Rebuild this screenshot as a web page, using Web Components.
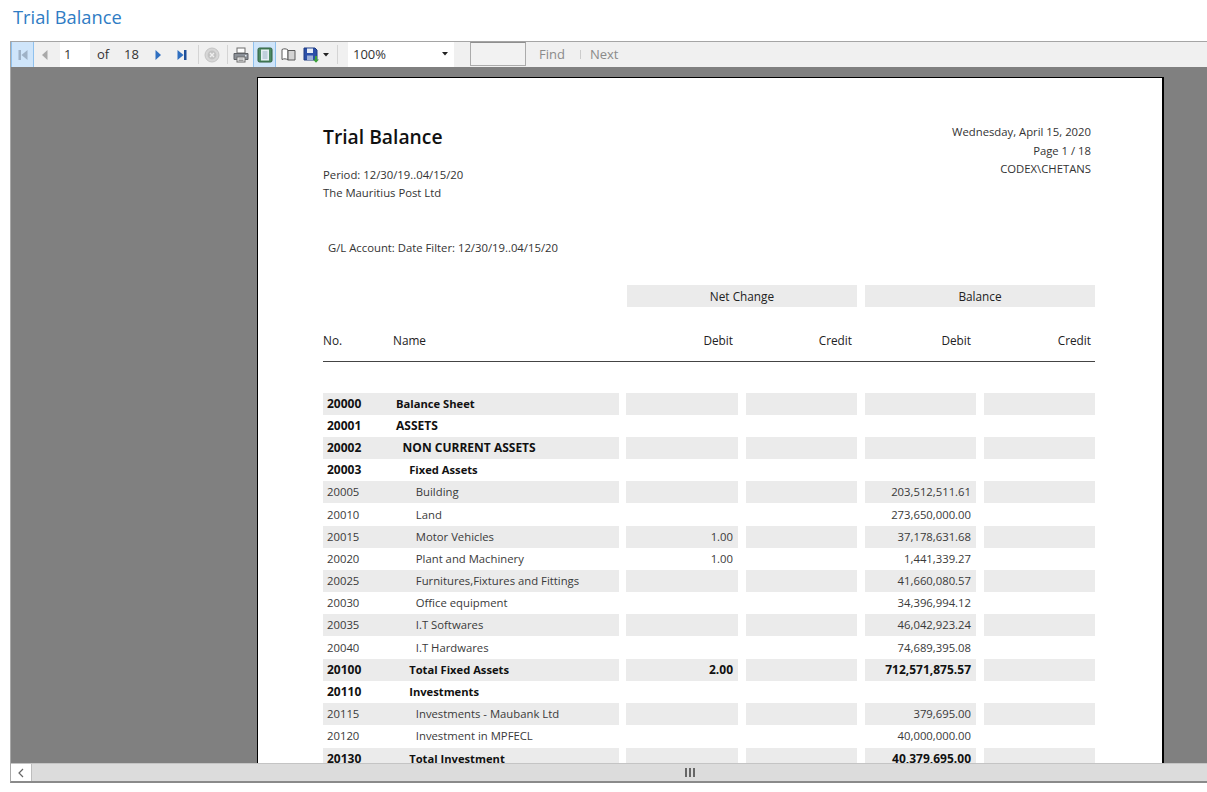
<!DOCTYPE html>
<html>
<head>
<meta charset="utf-8">
<title>Trial Balance</title>
<style>
    html, body { margin: 0; height: 100%; background: #fff; overflow: hidden; }
    body { font-family: "Open Sans", "Noto Sans", sans-serif; }
</style>
</head>
<body>
<report-app></report-app>

<script>
const ROWS = [
    { no: '20000', name: 'Balance Sheet', bold: true, indent: 0 },
    { no: '20001', name: 'ASSETS', bold: true, caps: true, indent: 0 },
    { no: '20002', name: 'NON CURRENT ASSETS', bold: true, caps: true, indent: 1 },
    { no: '20003', name: 'Fixed Assets', bold: true, indent: 2 },
    { no: '20005', name: 'Building', indent: 3, balance: '203,512,511.61' },
    { no: '20010', name: 'Land', indent: 3, balance: '273,650,000.00' },
    { no: '20015', name: 'Motor Vehicles', indent: 3, net: '1.00', balance: '37,178,631.68' },
    { no: '20020', name: 'Plant and Machinery', indent: 3, net: '1.00', balance: '1,441,339.27' },
    { no: '20025', name: 'Furnitures,Fixtures and Fittings', indent: 3, balance: '41,660,080.57' },
    { no: '20030', name: 'Office equipment', indent: 3, balance: '34,396,994.12' },
    { no: '20035', name: 'I.T Softwares', indent: 3, balance: '46,042,923.24' },
    { no: '20040', name: 'I.T Hardwares', indent: 3, balance: '74,689,395.08' },
    { no: '20100', name: 'Total Fixed Assets', bold: true, indent: 2, net: '2.00', balance: '712,571,875.57' },
    { no: '20110', name: 'Investments', bold: true, indent: 2 },
    { no: '20115', name: 'Investments - Maubank Ltd', indent: 3, balance: '379,695.00' },
    { no: '20120', name: 'Investment in MPFECL', indent: 3, balance: '40,000,000.00' },
    { no: '20130', name: 'Total Investment', bold: true, indent: 2, balance: '40,379,695.00' }
];

const ICONS = {
    first: `<svg width="12" height="12" viewBox="0 0 12 12"><rect x="1.500" y="1" width="2.500" height="10" fill="#9fb2c6"/><path d="M10.500 1v10L4.500 6z" fill="#9fb2c6"/></svg>`,
    prev: `<svg width="12" height="12" viewBox="0 0 12 12"><path d="M8.500 1v10L3 6z" fill="#a9a9a9"/></svg>`,
    next: `<svg width="12" height="12" viewBox="0 0 12 12"><path d="M3.500 1v10L9 6z" fill="#2f6fc0"/></svg>`,
    last: `<svg width="12" height="12" viewBox="0 0 12 12"><path d="M1.500 1v10L7.500 6z" fill="#2f6fc0"/><rect x="8" y="1" width="2.500" height="10" fill="#1f4f9a"/></svg>`,
    stop: `<svg width="16" height="16" viewBox="0 0 16 16"><circle cx="8" cy="8" r="7" fill="#d6d6d6" stroke="#c4c4c4"/><circle cx="8" cy="8" r="4.400" fill="#c2c2c2"/><path d="M6 6l4 4M10 6l-4 4" stroke="#eee" stroke-width="1.400"/></svg>`,
    print: `<svg width="16" height="16" viewBox="0 0 16 16"><rect x="4" y="1" width="8" height="5" fill="#fff" stroke="#6d6d6d"/><path d="M1 6.500h14v6H1z" fill="#8b9097" stroke="#5e6166"/><rect x="4" y="10" width="8" height="5" fill="#f5f5f5" stroke="#6d6d6d"/><path d="M5.500 12h5M5.500 13.500h5" stroke="#9a9a9a"/><rect x="12" y="8" width="1.500" height="1.500" fill="#dfe6ee"/></svg>`,
    layout: `<svg width="16" height="16" viewBox="0 0 16 16"><rect x="1" y="1" width="14" height="14" rx="1.500" fill="#4d8a63" stroke="#2f5f40"/><rect x="4" y="2.500" width="8" height="11" fill="#e7eef4"/><path d="M5.500 5h5M5.500 7h5M5.500 9h5M5.500 11h5" stroke="#9bb0c4"/></svg>`,
    book: `<svg width="15" height="13" viewBox="0 0 15 13"><path d="M1 1.500c2-1 4-1 6 .5v10c-2-1.500-4-1.500-6-.5z" fill="#fff" stroke="#5a5a5a"/><path d="M7 2.500h7v9.500H7z" fill="#d3d3d3" stroke="#5a5a5a"/></svg>`,
    save: `<svg width="16" height="16" viewBox="0 0 16 16"><path d="M1 1h11l2 2v10H1z" fill="#2b4fa8" stroke="#1e3a80"/><rect x="4" y="1.500" width="6" height="4.500" fill="#e8edf5"/><rect x="4" y="8.500" width="6" height="4.500" fill="#9cb0d8"/><path d="M12 9v3.500h-2l3 3.200 3-3.200h-2V9z" fill="#3da13a"/></svg>`,
    caret: `<svg width="6" height="4" viewBox="0 0 6 4"><path d="M0 0h6L3 3.500z" fill="#222"/></svg>`
};

class ReportApp extends HTMLElement {
    constructor() {
        super();
        this.attachShadow({ mode: 'open' });
    }

    connectedCallback() {
        this.shadowRoot.innerHTML = `
            <style>
                :host {
                    display: block;
                    height: 792px;
                    box-sizing: border-box;
                    padding-left: 10px;
                }
                h1 {
                    margin: 0 0 0 3px;
                    height: 41px;
                    box-sizing: border-box;
                    padding-top: 4px;
                    font-size: 18.300px;
                    line-height: 25px;
                    font-weight: 400;
                    color: #2f7cc4;
                }
            </style>
            <h1>Trial Balance</h1>
            <report-viewer></report-viewer>
        `;
    }
}

class ReportViewer extends HTMLElement {
    constructor() {
        super();
        this.attachShadow({ mode: 'open' });
    }

    connectedCallback() {
        this.shadowRoot.innerHTML = `
            <style>
                :host {
                    display: flex;
                    flex-direction: column;
                    height: 742px;
                    box-sizing: border-box;
                    border-left: 1px solid #a8a8a8;
                    border-bottom: 2px solid #8a8a8a;
                }
                .canvas {
                    flex: 1;
                    min-height: 0;
                    background: #808080;
                    overflow: hidden;
                    padding: 10px 0 0 246px;
                }
            </style>
            <viewer-toolbar></viewer-toolbar>
            <div class="canvas"><report-page></report-page></div>
            <viewer-scrollbar></viewer-scrollbar>
        `;
    }
}

class ViewerToolbar extends HTMLElement {
    constructor() {
        super();
        this.attachShadow({ mode: 'open' });
    }

    connectedCallback() {
        this.shadowRoot.innerHTML = `
            <style>
                :host {
                    display: flex;
                    align-items: stretch;
                    height: 26px;
                    box-sizing: border-box;
                    background: #f0f0f0;
                    border-top: 1px solid #a5a5a5;
                    font-size: 13px;
                    color: #333;
                    flex: none;
                }
                .btn {
                    display: flex;
                    align-items: center;
                    justify-content: center;
                    box-sizing: border-box;
                    flex: none;
                }
                .on {
                    background: #cfe5fa;
                    border: 1px solid #8fc1ee;
                    border-top: 0;
                    border-bottom: 0;
                }
                .sep {
                    flex: none;
                    width: 1px;
                    margin: 3px 0;
                    background: #d4d4d4;
                }
                .field {
                    flex: none;
                    display: flex;
                    align-items: center;
                    background: #fff;
                    box-sizing: border-box;
                    padding-bottom: 2px;
                }
                .txt { flex: none; display: flex; align-items: center; padding-bottom: 2px; }
                .find {
                    flex: none;
                    width: 56px;
                    height: 24px;
                    box-sizing: border-box;
                    margin-left: 16px;
                    background: #f2f2f2;
                    border: 1px solid #ababab;
                    border-top-color: #8f8f8f;
                }
                .link { color: #8a8a8a; }
            </style>
            <div class="btn on" style="width:23px">${ICONS.first}</div>
            <div class="btn" style="width:22px">${ICONS.prev}</div>
            <div class="field" style="width:30px;padding-left:4px;margin-left:4px">1</div>
            <div class="txt" style="margin-left:7px;width:27px">of</div>
            <div class="txt" style="width:20px">18</div>
            <div class="btn" style="width:28px">${ICONS.next}</div>
            <div class="btn" style="width:19px">${ICONS.last}</div>
            <div class="sep" style="margin-left:7px"></div>
            <div class="btn" style="width:26px">${ICONS.stop}</div>
            <div class="sep" style="margin-left:2px"></div>
            <div class="btn" style="width:25px">${ICONS.print}</div>
            <div class="btn on" style="width:23px">${ICONS.layout}</div>
            <div class="btn" style="width:24px">${ICONS.book}</div>
            <div class="btn" style="width:22px">${ICONS.save}</div>
            <div class="btn" style="width:8px">${ICONS.caret}</div>
            <div class="sep" style="margin-left:7px"></div>
            <div class="field" style="width:106px;margin-left:10px;padding-left:5px;justify-content:space-between">
                100%<span style="display:flex;padding-right:6px">${ICONS.caret}</span>
            </div>
            <div class="find"></div>
            <div class="txt link" style="margin-left:13px">Find</div>
            <div class="sep" style="margin:8px 9px 8px 15px;background:#ccc"></div>
            <div class="txt link">Next</div>
        `;
    }
}

class ReportPage extends HTMLElement {
    constructor() {
        super();
        this.attachShadow({ mode: 'open' });
    }

    connectedCallback() {
        this.shadowRoot.innerHTML = `
            <style>
                :host {
                    display: block;
                    width: 907px;
                    box-sizing: border-box;
                    background: #fff;
                    border: 1px solid #000;
                    border-right-width: 2px;
                    border-bottom: 0;
                    padding: 44px 67px 0 65px;
                    font-size: 11.300px;
                    color: #333;
                }
                .head { display: flex; justify-content: space-between; }
                h2 {
                    margin: 0 0 15px;
                    font-size: 19.300px;
                    line-height: 29px;
                    font-weight: 600;
                    color: #111;
                }
                .meta { line-height: 18.300px; }
                .info {
                    padding: 1px 4px 0 0;
                    text-align: right;
                    line-height: 18.500px;
                }
                .filter { margin: 36px 0 0 5px; line-height: 18px; }
                .bands {
                    display: grid;
                    grid-template-columns: 296px 231px 231px;
                    column-gap: 7px;
                    margin-top: 28px;
                    height: 22px;
                    line-height: 22px;
                    font-size: 11.800px;
                    color: #222;
                }
                .bands div {
                    background: #ebebeb;
                    text-align: center;
                }
                .bands div:first-child { background: none; }
                .bands div:nth-child(n+2) { margin-left: 1px; }
                .cols {
                    display: grid;
                    grid-template-columns: 296px repeat(4, 112px);
                    column-gap: 7px;
                    margin-top: 22px;
                    height: 32px;
                    line-height: 22px;
                    font-size: 11.800px;
                    color: #222;
                    border-bottom: 1px solid #444;
                }
                .cols .r { text-align: right; padding-right: 5px; }
                .cols .main { display: flex; }
                .cols .no { width: 70px; flex: none; }
                .rows { margin-top: 31px; }
            </style>
            <div class="head">
                <div>
                    <h2>Trial Balance</h2>
                    <div class="meta">Period: 12/30/19..04/15/20<br>The Mauritius Post Ltd</div>
                </div>
                <div class="info">Wednesday, April 15, 2020<br>Page 1 / 18<br>CODEX\\CHETANS</div>
            </div>
            <div class="filter">G/L Account: Date Filter: 12/30/19..04/15/20</div>
            <div class="bands">
                <div></div>
                <div>Net Change</div>
                <div>Balance</div>
            </div>
            <div class="cols">
                <div class="main"><span class="no">No.</span><span>Name</span></div>
                <span class="r">Debit</span>
                <span class="r">Credit</span>
                <span class="r">Debit</span>
                <span class="r" style="padding-right:4px">Credit</span>
            </div>
            <div class="rows"></div>
        `;
        const wrap = this.shadowRoot.querySelector('.rows');
        ROWS.forEach((row, i) => {
            const el = document.createElement('tb-row');
            el.data = row;
            el.toggleAttribute('shade', i % 2 === 0);
            wrap.appendChild(el);
        });
    }
}

class TbRow extends HTMLElement {
    constructor() {
        super();
        this.attachShadow({ mode: 'open' });
    }

    connectedCallback() {
        const d = this.data;
        this.shadowRoot.innerHTML = `
            <style>
                :host {
                    display: grid;
                    grid-template-columns: 296px repeat(4, 112px);
                    column-gap: 7px;
                    height: 22.200px;
                    line-height: 22px;
                    color: #3a3a3a;
                }
                :host([shade]) .cell { background: #ebebeb; height: 22px; }
                :host([bold]) { font-weight: 700; color: #111; font-size: 12px; }
                :host([bold]) .name { font-size: 11.200px; }
                :host([caps]) .name { font-size: 12px; }
                .cell:nth-child(n+4) { margin-left: 1px; }
                .main { display: flex; padding-left: 4px; }
                .no { width: 69px; flex: none; }
                .num { text-align: right; padding-right: 5px; }
            </style>
            <div class="cell main">
                <span class="no">${d.no}</span>
                <span class="name" style="padding-left:${(d.indent * 6.6).toFixed(1)}px">${d.name}</span>
            </div>
            <div class="cell num">${d.net || ''}</div>
            <div class="cell num"></div>
            <div class="cell num">${d.balance || ''}</div>
            <div class="cell num"></div>
        `;
        this.toggleAttribute('bold', !!d.bold);
        this.toggleAttribute('caps', !!d.caps);
    }
}

class ViewerScrollbar extends HTMLElement {
    constructor() {
        super();
        this.attachShadow({ mode: 'open' });
    }

    connectedCallback() {
        this.shadowRoot.innerHTML = `
            <style>
                :host {
                    display: flex;
                    flex: none;
                    height: 18px;
                    box-sizing: border-box;
                    background: #dcdcdc;
                    border-top: 1px solid #c4c4c4;
                }
                .left {
                    flex: none;
                    width: 20px;
                    background: #fff;
                    border-right: 1px solid #bdbdbd;
                    display: flex;
                    align-items: center;
                    justify-content: center;
                }
                .thumb {
                    flex: 1;
                    display: flex;
                    align-items: center;
                    justify-content: center;
                    padding-left: 141px;
                    gap: 2px;
                }
                .thumb i { width: 2px; height: 9px; background: #666; }
            </style>
            <div class="left">
                <svg width="8" height="10" viewBox="0 0 8 10"><path d="M6 1L2 5l4 4" fill="none" stroke="#666" stroke-width="1.200"/></svg>
            </div>
            <div class="thumb"><i></i><i></i><i></i></div>
        `;
    }
}

customElements.define('tb-row', TbRow);
customElements.define('report-page', ReportPage);
customElements.define('viewer-scrollbar', ViewerScrollbar);
customElements.define('viewer-toolbar', ViewerToolbar);
customElements.define('report-viewer', ReportViewer);
customElements.define('report-app', ReportApp);
</script>
</body>
</html>
